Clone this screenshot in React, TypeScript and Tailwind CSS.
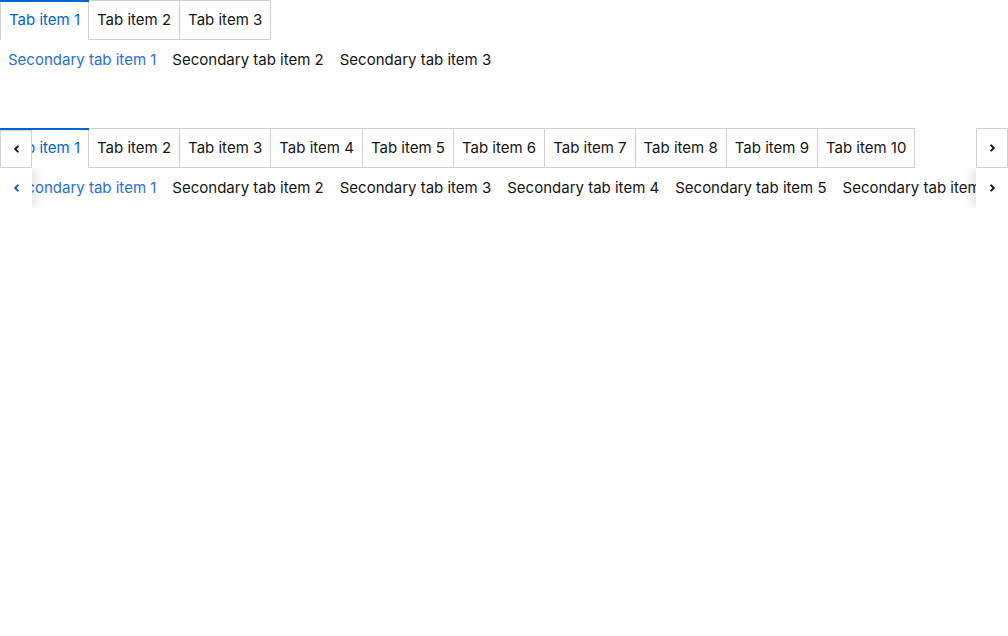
import React from 'react';

const font = { fontFamily: 'Inter, "Liberation Sans", sans-serif' };

function Angle({ dir, className }: { dir: 'left' | 'right'; className?: string }) {
  return (
    <svg viewBox="0 0 256 512" width="7" height="12" className={className} fill="currentColor">
      {dir === 'left' ? (
        <path d="M31.7 239l136-136c9.4-9.4 24.6-9.4 33.9 0l22.6 22.6c9.4 9.4 9.4 24.6 0 33.9L127.9 256l96.4 96.4c9.4 9.4 9.4 24.6 0 33.9L201.7 409c-9.4 9.4-24.6 9.4-33.9 0l-136-136c-9.5-9.4-9.5-24.6-.1-34z" />
      ) : (
        <path d="M224.3 273l-136 136c-9.4 9.4-24.6 9.4-33.9 0l-22.6-22.6c-9.4-9.4-9.4-24.6 0-33.9l96.4-96.4-96.4-96.4c-9.4-9.4-9.4-24.6 0-33.9L54.3 103c9.4-9.4 24.6-9.4 33.9 0l136 136c9.5 9.4 9.5 24.6.1 34z" />
      )}
    </svg>
  );
}

function BoxTabs({ count }: { count: number }) {
  const tabs = Array.from({ length: count }, (_, i) => `Tab item ${i + 1}`);
  return (
    <div className="flex">
      {tabs.map((t, i) => (
        <button
          key={t}
          className={`relative h-10 px-2 text-[15px] whitespace-nowrap border-t border-r border-[#d2d2d2] ${
            i === 0 ? 'border-l text-[#06c]' : 'border-b text-[#151515]'
          }`}
        >
          {i === 0 && <span className="absolute -left-px -right-px -top-px h-[2px] bg-[#06c]" />}
          {t}
        </button>
      ))}
    </div>
  );
}

function SecondaryTabs({ count }: { count: number }) {
  const tabs = Array.from({ length: count }, (_, i) => `Secondary tab item ${i + 1}`);
  return (
    <div className="flex h-10 items-center">
      {tabs.map((t, i) => (
        <button
          key={t}
          className={`px-2 text-[15px] whitespace-nowrap ${i === 0 ? 'text-[#2b6fd6]' : 'text-[#151515]'}`}
        >
          {t}
        </button>
      ))}
    </div>
  );
}

export default function App() {
  return (
    <div className="w-[1008px] h-[636px] bg-white overflow-hidden" style={font}>
      <BoxTabs count={3} />
      <SecondaryTabs count={3} />

      <div className="mt-12">
        <div className="relative overflow-hidden">
          <BoxTabs count={10} />
          <button className="absolute left-0 top-[2px] bottom-0 w-8 flex items-center justify-center bg-white border border-[#d2d2d2] text-[#151515]">
            <Angle dir="left" />
          </button>
          <button className="absolute right-0 top-0 bottom-0 w-8 flex items-center justify-center bg-white border border-[#d2d2d2] text-[#151515]">
            <Angle dir="right" />
          </button>
        </div>
        <div className="relative overflow-hidden">
          <SecondaryTabs count={10} />
          <button className="absolute left-0 top-0 bottom-0 w-8 flex items-center justify-center bg-white shadow-[6px_0_10px_-2px_rgba(0,0,0,0.12)] text-[#06c]">
            <Angle dir="left" />
          </button>
          <button className="absolute right-0 top-0 bottom-0 w-8 flex items-center justify-center bg-white shadow-[-6px_0_10px_-2px_rgba(0,0,0,0.12)] text-[#151515]">
            <Angle dir="right" />
          </button>
        </div>
      </div>
    </div>
  );
}
